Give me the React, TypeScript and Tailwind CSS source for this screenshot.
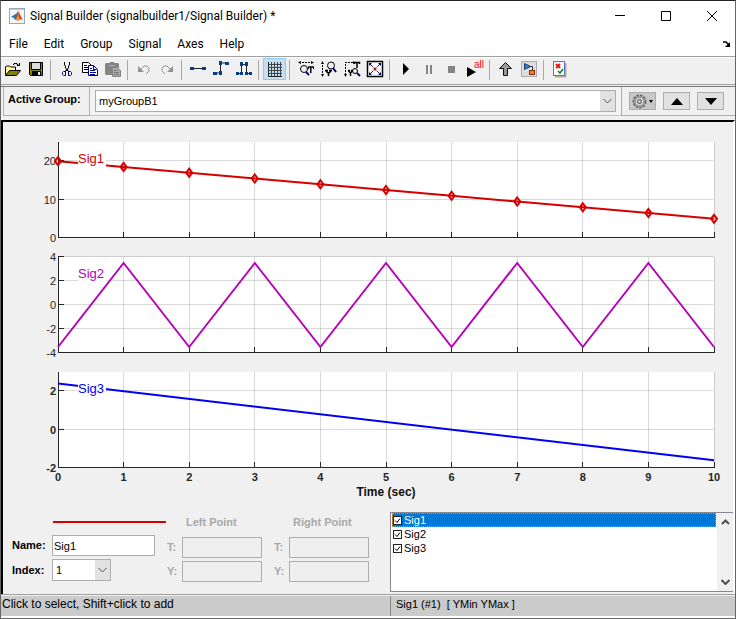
import { useState } from "react";
import type { ReactNode } from "react";

interface Signal {
  name: string;
  color: string;
  top: number;
  min: number;
  max: number;
  ticks: number[];
  points: [number, number][];
  labelY: number;
  markers?: boolean;
  bold?: boolean;
}

const MENUS = ["File", "Edit", "Group", "Signal", "Axes", "Help"];

const STEPS = Array.from({ length: 11 }, (_, i) => i);

const SIGNALS: Signal[] = [
  {
    name: "Sig1",
    color: "#d60000",
    top: 20,
    min: 0,
    max: 25,
    ticks: [20, 10, 0],
    points: STEPS.map((t) => [t, 20 - 1.5 * t]),
    labelY: 41,
    markers: true,
  },
  {
    name: "Sig2",
    color: "#b800b8",
    top: 135,
    min: -4,
    max: 4,
    ticks: [4, 2, 0, -2, -4],
    points: STEPS.map((t) => [t, t % 2 ? 3.5 : -3.5]),
    labelY: 156,
  },
  {
    name: "Sig3",
    color: "#0000f5",
    top: 250,
    min: -2,
    max: 3,
    ticks: [2, 0, -2],
    points: [[0, 2.4], [10, -1.6]],
    labelY: 271,
    bold: true,
  },
];

const LEFT = 55;
const WIDTH = 656;
const HEIGHT = 96;

const xAt = (t: number) => LEFT + (t * WIDTH) / 10;
const snap = (v: number) => Math.floor(v) + 0.5;

function Axes({ signal }: { signal: Signal }) {
  const { top, min, max, ticks, points, color } = signal;
  const yAt = (v: number) => top + ((max - v) / (max - min)) * HEIGHT;
  const bottom = snap(top + HEIGHT - 1);

  return (
    <g>
      <rect x={LEFT} y={top} width={WIDTH} height={HEIGHT} fill="#fff" />
      <g stroke="#000" strokeOpacity="0.15" shapeRendering="crispEdges">
        {STEPS.slice(1).map((t) => (
          <line key={t} x1={snap(xAt(t))} x2={snap(xAt(t))} y1={top} y2={top + HEIGHT} />
        ))}
        {ticks.map((v) => (
          <line key={v} x1={LEFT} x2={LEFT + WIDTH} y1={snap(yAt(v) - 0.5)} y2={snap(yAt(v) - 0.5)} />
        ))}
      </g>
      <g stroke="#262626" shapeRendering="crispEdges">
        <path d={`M${LEFT + 0.5} ${top}V${bottom}H${LEFT + WIDTH + 1}`} fill="none" />
        {STEPS.slice(1).map((t) => (
          <line key={t} x1={snap(xAt(t))} x2={snap(xAt(t))} y1={bottom} y2={bottom - 6} />
        ))}
        {ticks.map((v) => (
          <line key={v} x1={LEFT} x2={LEFT + 6} y1={snap(yAt(v) - 0.5)} y2={snap(yAt(v) - 0.5)} />
        ))}
      </g>
      {ticks.map((v) => (
        <text
          key={v}
          x={LEFT - 2}
          y={yAt(v) + 4}
          textAnchor="end"
          fontSize="11"
          fontWeight={signal.bold ? 700 : 400}
          fill="#262626"
        >
          {v}
        </text>
      ))}
      <polyline
        points={points.map(([t, v]) => `${xAt(t)},${yAt(v)}`).join(" ")}
        fill="none"
        stroke={color}
        strokeWidth="2"
      />
      {signal.markers &&
        points.map(([t, v]) => (
          <path
            key={t}
            d={`M${xAt(t)} ${yAt(v) - 4}l3 4l-3 4l-3 -4z`}
            fill="none"
            stroke={color}
            strokeWidth="2"
          />
        ))}
      <rect x="75" y={signal.labelY - 12} width="28" height="16" fill="#fff" />
      <text x="75" y={signal.labelY} fontSize="13" fill={color}>
        {signal.name}
      </text>
    </g>
  );
}

function Plots() {
  return (
    <svg viewBox="0 0 730 380" className="block h-auto w-full" fontFamily="'Liberation Sans', Arial, sans-serif">
      {SIGNALS.map((signal) => (
        <Axes key={signal.name} signal={signal} />
      ))}
      {STEPS.map((t) => (
        <text key={t} x={xAt(t)} y="359" textAnchor="middle" fontSize="11" fontWeight="700" fill="#262626">
          {t}
        </text>
      ))}
      <text x="383" y="374" textAnchor="middle" fontSize="12" fontWeight="700" fill="#111">
        Time (sec)
      </text>
    </svg>
  );
}

const TOOLS: { label: string; icon?: ReactNode; active?: boolean }[] = [
  {
    label: "Open",
    icon: (
      <>
        <path d="M.5 14V6l1-1h3l1 1h5v3" fill="#ffff9c" stroke="#000" />
        <path d="M.5 14.5l4-5h11l-4 5z" fill="#848200" stroke="#000" />
        <path d="M8 3.5h1v-1h3v1h1v1h1M14.5 2v3M12 4.500h3" fill="none" stroke="#000" />
      </>
    ),
  },
  {
    label: "Save",
    icon: (
      <>
        <path d="M1.500 1.500h13v13h-12l-1-1z" fill="#848200" stroke="#000" />
        <path d="M3.500 2v6.500h9V2" fill="#dcdcdc" stroke="#000" />
        <rect x="4" y="10" width="9" height="4" fill="#000" />
        <rect x="10" y="11" width="2" height="3" fill="#eee" />
      </>
    ),
  },
  { label: "" },
  {
    label: "Cut",
    icon: (
      <>
        <path d="M5.500 1v3l1 1v2l1 1v2M10.500 1v3l-1 1v2l-1 1v2" stroke="#000" fill="none" />
        <path d="M7 9l-1 2M8 8l2 3M4.500 10.500h2v4h-2l-1-1v-2zM9.500 10.500h2l1 1v2l-1 1h-2z" stroke="#000084" fill="none" />
      </>
    ),
  },
  {
    label: "Copy",
    icon: (
      <>
        <path d="M.5 1.500h6l3 3v7h-9z" fill="#fff" stroke="#000" />
        <path d="M2 4.500h3M2 6.500h4M2 8.500h4" stroke="#000" />
        <path d="M6.500 4.500h5l4 4v6h-9z" fill="#fff" stroke="#000084" />
        <path d="M11.500 5v3.500h3M8 7.500h2M8 9.500h5M8 11.500h6M8 13.500h5" stroke="#000084" fill="none" />
      </>
    ),
  },
  {
    label: "Paste",
    icon: (
      <>
        <path d="M0 3l1-1h4V1h4v1h4l1 1v11H1l-1-1z" fill="#848484" />
        <path d="M4 4.500h6" stroke="#aaa" />
        <path d="M7.500 6.500h5l3 3v6h-8z" fill="#aaa" stroke="#848484" />
        <path d="M9 9.500h3M9 11.500h5M9 13.500h5" stroke="#777" />
      </>
    ),
  },
  { label: "" },
  {
    label: "Undo",
    icon: (
      <>
        <path d="M5 8l3-3h3l2 2v3l-3 3" stroke="#929292" fill="none" />
        <path d="M2 5v6h6z" fill="#929292" />
      </>
    ),
  },
  {
    label: "Redo",
    icon: (
      <>
        <path d="M11 8L8 5H5L3 7v3l3 3" stroke="#929292" fill="none" />
        <path d="M14 5v6H8z" fill="#929292" />
      </>
    ),
  },
  { label: "" },
  {
    label: "Line segment",
    icon: (
      <>
        <path d="M1 7.500h14" stroke="#222" />
        <path d="M0 6h4v3H0zM12 6h4v3h-4z" fill="#00408a" />
      </>
    ),
  },
  {
    label: "Step",
    icon: (
      <>
        <path d="M1 12h6.500V2H14" stroke="#222" fill="none" />
        <path d="M0 11h4v3H0zM6 10h3v4H6zM6 0h3v4H6zM12 1h4v3h-4z" fill="#00408a" />
      </>
    ),
  },
  {
    label: "Pulse",
    icon: (
      <>
        <path d="M1 12.500h4.500v-9h5v9H15" stroke="#222" fill="none" />
        <path d="M0 11h3v3H0zM4 11h3v3H4zM9 11h3v3H9zM13 11h3v3h-3zM4 1h3v4H4zM9 1h3v4H9z" fill="#00408a" />
      </>
    ),
  },
  { label: "" },
  {
    label: "Grid",
    active: true,
    icon: (
      <>
        <path d="M1.500 1v14.500H15" stroke="#222" fill="none" />
        <path d="M4.500 1v14M7.500 1v14M10.500 1v14M13.500 1v14M1 3.500h14M1 6.500h14M1 9.500h14M1 12.500h14" stroke="#444" />
      </>
    ),
  },
  { label: "" },
  {
    label: "Zoom time",
    icon: (
      <>
        <path d="M1 1.500h14" stroke="#000" strokeDasharray="2 1" />
        <path d="M3 0v3L0 1.500zM13 0v3l3-1.500z" fill="#000" />
        <circle cx="6" cy="8" r="3.500" fill="none" stroke="#000" />
        <path d="M10.500 8V6h5v2M13 6v6" stroke="#000" fill="none" />
        <path d="M12.500 6v6M10 6h6" stroke="#000" />
        <path d="M8 11l3 3" stroke="#000084" strokeWidth="2" />
      </>
    ),
  },
  {
    label: "Zoom Y",
    icon: (
      <>
        <path d="M1.500 1v14" stroke="#000" strokeDasharray="2 1" />
        <path d="M0 3h3L1.500 0zM0 13h3l-1.500 3z" fill="#000" />
        <circle cx="10" cy="4.500" r="3.500" fill="none" stroke="#000" />
        <path d="M4 9.500h3M8 9.500h3M5 10l2.500 2.500L10 10M7.500 12v3" fill="none" stroke="#000" strokeWidth="1.500" />
        <path d="M12 7l3 4" stroke="#000084" strokeWidth="2" />
      </>
    ),
  },
  {
    label: "Zoom both",
    icon: (
      <>
        <path d="M1 1.500h8M1.500 3v12" stroke="#000" strokeDasharray="2 1" />
        <path d="M0 13h3l-1.500 3zM9 0v3l2-1.500z" fill="#000" />
        <path d="M10.500 3V1.500h5V3M13 1v6M4 9.500h2M7 9.500h2M4.500 10l2 2l2-2M6.500 12v3" fill="none" stroke="#000" strokeWidth="1.500" />
        <circle cx="11" cy="10" r="2.500" fill="none" stroke="#000" />
        <path d="M13 12l3 3" stroke="#000084" strokeWidth="2" />
      </>
    ),
  },
  {
    label: "Fit view",
    icon: (
      <>
        <rect x=".5" y=".5" width="15" height="15" fill="#fff" stroke="#000" strokeWidth="1.500" />
        <path d="M3 3l10 10M13 3L3 13" stroke="#223" strokeDasharray="4 1" />
        <path d="M2 2h3L2 5zM14 2h-3l3 3zM2 14h3l-3-3zM14 14h-3l3-3z" fill="#000084" />
        <circle cx="8" cy="8" r="1.500" fill="#d00000" />
      </>
    ),
  },
  { label: "" },
  { label: "Start", icon: <path d="M5 2v12l6-6z" fill="#000" /> },
  { label: "Pause", icon: <path d="M5 4h2v9H5zM9 4h2v9H9z" fill="#848484" /> },
  { label: "Stop", icon: <path d="M4 5h7v7H4z" fill="#848484" /> },
  {
    label: "Run all",
    icon: (
      <>
        <path d="M0 6v10l9-5z" fill="#000" />
        <text x="7" y="7" fontSize="10" fontFamily="'Liberation Sans', Arial, sans-serif" fill="#f00">
          all
        </text>
      </>
    ),
  },
  { label: "" },
  {
    label: "Go up",
    icon: <path d="M7.500 1.500l6 6h-4v7h-4v-7h-4z" fill="#999" stroke="#111" />,
  },
  {
    label: "Simulink model",
    icon: (
      <>
        <rect x=".5" y=".5" width="15" height="15" fill="#ddd" stroke="#aaa" />
        <path d="M3.500 2.500l6 3l-6 3z" fill="#2c86c8" stroke="#123d78" />
        <path d="M8 5.500h3.500V9" fill="none" stroke="#333" />
        <rect x="8.500" y="9.500" width="5" height="4" fill="#f27b42" stroke="#8c2a0c" />
      </>
    ),
  },
  { label: "" },
  {
    label: "Verification settings",
    icon: (
      <>
        <path d="M13.500 2v13.500H3" stroke="#b8ad90" fill="none" strokeWidth="2" />
        <rect x="1.500" y=".5" width="11" height="14" fill="#fdfdff" stroke="#5576c8" />
        <path d="M4 3l4 4M8 3L4 7" stroke="#e01a10" strokeWidth="2" />
        <path d="M6 10l2 2l3-4" fill="none" stroke="#16801c" strokeWidth="1.500" />
      </>
    ),
  },
];

function Chevron({ up = false, heavy = false }: { up?: boolean; heavy?: boolean }) {
  return (
    <svg width="9" height="6" viewBox="0 0 9 6" fill="none" stroke="#505050" strokeWidth={heavy ? 2 : 1}>
      <path d={up ? "M1 5l3.500-3.500L8 5" : "M.5 1l4 4l4-4"} />
    </svg>
  );
}

function Combo({ id, label, options }: { id: string; label?: string; options: string[] }) {
  return (
    <div className="relative w-full">
      <select
        id={id}
        aria-label={label}
        className="block h-[22px] w-full appearance-none border border-[#adadad] bg-white pl-[3px] pr-5 text-[11px] font-normal"
      >
        {options.map((option) => (
          <option key={option}>{option}</option>
        ))}
      </select>
      <span className="pointer-events-none absolute inset-y-px right-px flex w-[15px] items-center justify-center bg-[#e1e1e1]">
        <Chevron />
      </span>
    </div>
  );
}

function PointFields({ side, title }: { side: string; title: string }) {
  return (
    <div className="w-[107px] text-[#a8a8a8]">
      <div className="-mt-0.5 mb-[7px] pl-[19px] leading-4">{title}</div>
      <div className="grid grid-cols-[15px_80px] items-center gap-y-[3px]">
        {["T", "Y"].map((axis) => (
          <div key={axis} className="contents">
            <label htmlFor={`${side}-${axis}`}>{axis}:</label>
            <input
              id={`${side}-${axis}`}
              disabled
              className="h-[21px] w-20 border border-[#adadad] bg-[#efefef] px-1 font-normal"
            />
          </div>
        ))}
      </div>
    </div>
  );
}

function SignalRow({ name, selected, onSelect }: { name: string; selected: boolean; onSelect: () => void }) {
  return (
    <label
      onClick={onSelect}
      className={`flex h-[14px] items-center gap-0.5 pl-px text-[11px] ${
        selected ? "bg-[#0078d7] text-white outline-1 -outline-offset-1 outline-dotted outline-[#d98b3c]" : ""
      }`}
    >
      <span className="relative size-[9px]">
        <input
          type="checkbox"
          defaultChecked
          className="peer block size-[9px] appearance-none border border-[#222] bg-white"
        />
        <svg viewBox="0 0 9 9" className="pointer-events-none absolute inset-0 hidden size-[9px] peer-checked:block">
          <path d="M2 4.500l2 2l3-4" fill="none" stroke="#000" />
        </svg>
      </span>
      {name}
    </label>
  );
}

export default function App() {
  const [selected, setSelected] = useState("Sig1");

  return (
    <div className="flex min-h-screen flex-col border border-[#666] border-t-[#222] bg-[#f0f0f0] font-['Liberation_Sans',Arial,sans-serif] text-black">
      {/* Title bar */}
      <header className="flex h-[30px] items-center bg-white pl-2 font-[Roboto,'Open_Sans',sans-serif] text-xs">
        <svg width="16" height="16" viewBox="0 0 16 16" className="mr-[5px]">
          <rect x=".5" y=".5" width="15" height="15" fill="#f4f6f8" stroke="#9aa7b4" />
          <path d="M1 1.500h14" stroke="#b8cde0" />
          <path d="M2 9l3-2l3-2l1-2l-1 8l-2 1l-1-2z" fill="#2a75b0" />
          <path d="M9 3c2 2 3 7 5 9l-3-1l-2 2l-3-2c2-2 2-5 3-8z" fill="#d3461a" />
          <path d="M9 4c0 3 0 5-2 7l2 2l1-2z" fill="#f2a33a" />
        </svg>
        <h1 className="flex-1 whitespace-nowrap">Signal Builder (signalbuilder1/Signal Builder) *</h1>
        <button aria-label="Minimize" className="flex h-full w-[46px] items-center justify-center">
          <svg width="10" height="10" viewBox="0 0 10 10" stroke="#000">
            <path d="M0 4.500h10" />
          </svg>
        </button>
        <button aria-label="Maximize" className="flex h-full w-[46px] items-center justify-center">
          <svg width="10" height="10" viewBox="0 0 10 10" stroke="#000" fill="none">
            <path d="M.5 .5h9v9h-9z" />
          </svg>
        </button>
        <button aria-label="Close" className="flex h-full w-[46px] items-center justify-center">
          <svg width="10" height="10" viewBox="0 0 10 10" stroke="#000">
            <path d="M0 0l10 10M10 0L0 10" />
          </svg>
        </button>
      </header>

      {/* Menu bar */}
      <nav className="flex h-[25px] items-center gap-4 bg-white pl-2 pr-1 font-[Roboto,'Open_Sans',sans-serif] text-xs">
        {MENUS.map((menu) => (
          <button key={menu}>{menu}</button>
        ))}
        <button aria-label="Dock window" className="ml-auto">
          <svg width="8" height="6" viewBox="0 0 8 6">
            <path d="M0 1h3l3 3" stroke="#000" strokeWidth="1.500" fill="none" />
            <path d="M7 1v5H2z" fill="#000" />
          </svg>
        </button>
      </nav>

      {/* Toolbar */}
      <div className="flex h-7 items-start border-t border-[#a0a0a0] pt-px shadow-[inset_0_1px_0_#fff]">
        {TOOLS.map((tool, i) =>
          tool.icon ? (
            <button
              key={i}
              aria-label={tool.label}
              className={`flex h-[22px] w-[23px] shrink-0 items-center justify-center ${
                tool.active ? "border border-[#90c8f6] bg-[#c4dff5]" : ""
              }`}
            >
              <svg width="16" height="16" viewBox="0 0 16 16" className="overflow-visible">
                {tool.icon}
              </svg>
            </button>
          ) : (
            <span key={i} className="mt-0.5 mr-1 ml-[3px] h-5 w-px shrink-0 bg-[#a8a8a8]" />
          ),
        )}
      </div>

      {/* Group selector */}
      <div className="flex h-9 border-t border-[#a0a0a0] pt-px">
        <div className="flex w-full border-t border-[#777]">
          <label
            htmlFor="group"
            className="mb-1 ml-0.5 w-[87px] shrink-0 border-x border-b border-[#b0b0b0] pt-1 pl-1 text-[11px] leading-4 font-bold"
          >
            Active Group:
          </label>
          <div className="mb-1 flex flex-1 items-center border-b border-[#c8c8c8] bg-[#f3f3f3] px-[5px]">
            <Combo id="group" options={["myGroupB1"]} />
          </div>
          <div className="mb-1 flex w-[114px] items-center gap-[7px] border-b border-l border-[#b0b0b0] pl-[7px]">
            <button
              aria-label="Group options"
              className="flex h-[18px] w-[27px] items-center justify-center gap-0.5 border border-[#adadad] bg-[#c8c8c8]"
            >
              <svg width="15" height="15" viewBox="0 0 15 15" fill="none">
                <circle cx="7.500" cy="7.500" r="6" stroke="#666" strokeWidth="2" strokeDasharray="2.500 1" />
                <circle cx="7.500" cy="7.500" r="4.500" fill="#e4e4e4" stroke="#9a9a9a" strokeWidth="2" />
                <circle cx="7.500" cy="7.500" r="2" fill="#d0d0d0" stroke="#444" />
              </svg>
              <svg width="4" height="3" viewBox="0 0 4 3">
                <path d="M0 0h4L2 3z" fill="#000" />
              </svg>
            </button>
            <button
              aria-label="Previous group"
              className="flex h-[18px] w-[27px] items-center justify-center border border-[#adadad] bg-[#e1e1e1]"
            >
              <svg width="12" height="7" viewBox="0 0 12 7">
                <path d="M6 0l6 7H0z" />
              </svg>
            </button>
            <button
              aria-label="Next group"
              className="flex h-[18px] w-[27px] items-center justify-center border border-[#adadad] bg-[#e1e1e1]"
            >
              <svg width="12" height="7" viewBox="0 0 12 7">
                <path d="M6 7l6-7H0z" />
              </svg>
            </button>
          </div>
        </div>
      </div>

      {/* Plots and signal properties */}
      <main className="flex-1 border-t-2 border-r-2 border-l-2 border-t-black border-r-white border-l-black bg-[#f0f0f0]">
        <Plots />
        <div className="flex items-start pt-2.5 pb-0.5">
          <div className="flex w-[387px] shrink-0 pt-1 text-[11px] font-bold">
            <div className="w-[164px] pl-[9px]">
              <div className="mt-[5px] mb-3 ml-[41px] h-0.5 w-[113px] bg-[#d60000]" />
              <div className="grid grid-cols-[40px_103px] items-center gap-y-[3px]">
                <label htmlFor="name">Name:</label>
                <input
                  id="name"
                  defaultValue="Sig1"
                  className="h-[21px] border border-[#adadad] bg-white px-px font-normal"
                />
                <label htmlFor="index">Index:</label>
                <div className="w-[59px]">
                  <Combo id="index" options={["1", "2", "3"]} />
                </div>
              </div>
            </div>
            <PointFields side="left" title="Left Point" />
            <PointFields side="right" title="Right Point" />
          </div>
          <div className="flex h-20 flex-1 border border-[#828790] border-r-0 bg-white">
            <div className="flex-1 px-px">
              {SIGNALS.map(({ name }) => (
                <SignalRow
                  key={name}
                  name={name}
                  selected={name === selected}
                  onSelect={() => setSelected(name)}
                />
              ))}
            </div>
            <div className="flex w-4 flex-col items-center justify-between bg-[#f0f0f0] py-1.5">
              <Chevron up heavy />
              <Chevron heavy />
            </div>
          </div>
        </div>
      </main>

      {/* Status bar */}
      <footer className="border-t border-b-2 border-t-[#a0a0a0] border-b-white pt-px">
        <div className="flex h-5 bg-[#cbcbcb]">
          <p className="w-[390px] shrink-0 border-r border-[#888] pl-px text-xs leading-4">
            Click to select, Shift+click to add
          </p>
          <p className="pl-[5px] text-[11px] leading-4 whitespace-pre">{"Sig1 (#1)  [ YMin YMax ]"}</p>
        </div>
      </footer>
    </div>
  );
}
